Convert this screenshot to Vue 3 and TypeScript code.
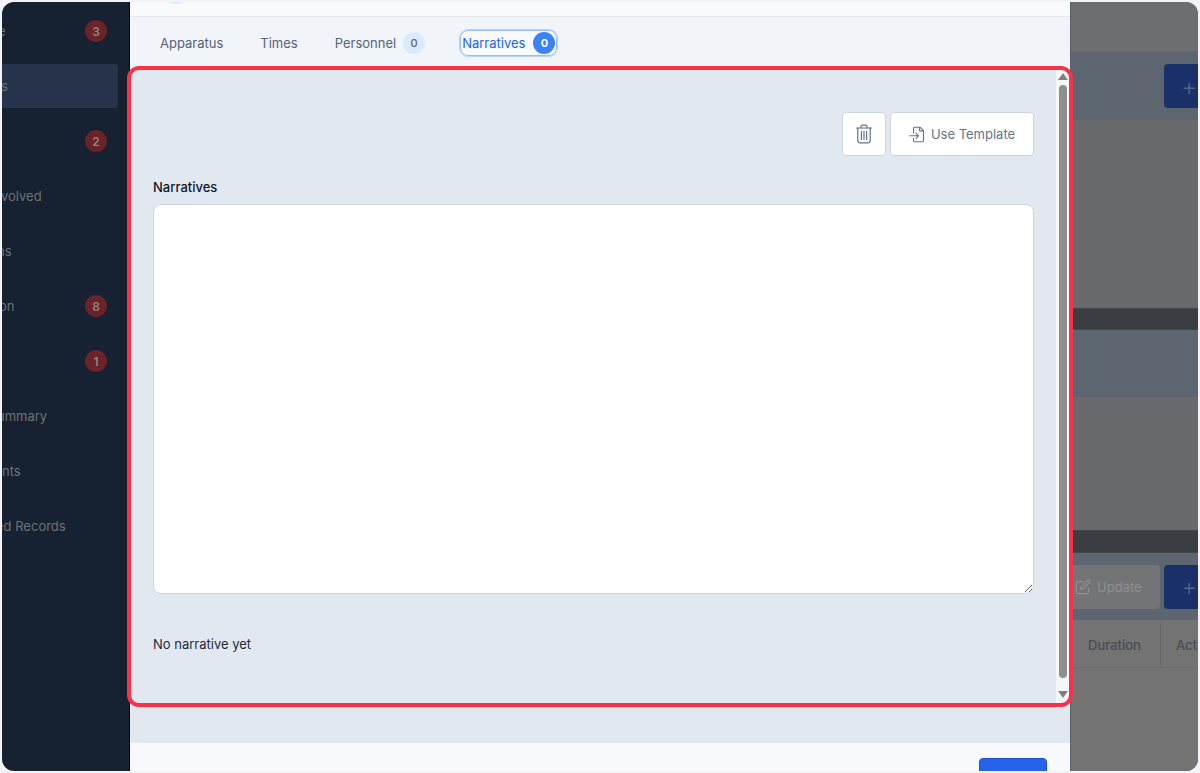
<script setup lang="ts">
interface NavItem {
  text: string;
  left: number;
  badge?: string;
  active?: boolean;
}

const navItems: NavItem[] = [
  { text: "e", left: -4, badge: "3" },
  { text: "s", left: -1, active: true },
  { text: "", left: 0, badge: "2" },
  { text: "volved", left: -1 },
  { text: "ns", left: -5 },
  { text: "on", left: -3, badge: "8" },
  { text: "", left: 0, badge: "1" },
  { text: "ummary", left: -5 },
  { text: "nts", left: 0 },
  { text: "ed Records", left: -6 },
];
</script>

<template>
  <div class="page">
    <div class="window">
      <aside class="sidebar">
        <div
          v-for="(item, i) in navItems"
          :key="i"
          class="nav-item"
          :class="{ active: item.active }"
        >
          <span class="nav-text" :style="{ marginLeft: item.left + 'px' }">{{ item.text }}</span>
          <span v-if="item.badge" class="nav-badge">{{ item.badge }}</span>
        </div>
      </aside>

      <main class="modal">
        <header class="modal-head"><span class="avatar"></span></header>
        <nav class="tabs">
          <span class="tab t1">Apparatus</span>
          <span class="tab t2">Times</span>
          <span class="tab t3">Personnel <span class="count">0</span></span>
          <span class="tab current">Narratives <span class="count on">0</span></span>
        </nav>

        <section class="scroll-wrap">
          <div class="content">
            <div class="actions">
              <button class="btn icon-btn" type="button" aria-label="Delete">
                <svg width="18" height="20" viewBox="0 0 18 20" fill="none" stroke="#64748b" stroke-width="1.2" stroke-linecap="round" stroke-linejoin="round">
                  <path d="M1.5 4h15" />
                  <path d="M6 4V2.6C6 1.7 6.6 1.2 7.4 1.2h3.2c.8 0 1.4.5 1.4 1.4V4" />
                  <path d="M2.8 4v12.6c0 1.3.9 2.2 2.2 2.2h8c1.3 0 2.2-.9 2.2-2.2V4" />
                  <path d="M6.4 7.4v8M9 7.4v8M11.6 7.4v8" />
                </svg>
              </button>
              <button class="btn tpl-btn" type="button">
                <svg width="16" height="17" viewBox="0 0 16 17" fill="none" stroke="#64748b" stroke-width="1.1" stroke-linecap="round" stroke-linejoin="round">
                  <path d="M4.5 7V2.4c0-.7.5-1.2 1.2-1.2H11l3.5 3.5v9.9c0 .7-.5 1.2-1.2 1.2H5.7c-.7 0-1.2-.5-1.2-1.2V12.5" />
                  <path d="M10.6 1.4v3.5h3.7" />
                  <path d="M.8 9.8h8.6M7 7.2l2.6 2.6L7 12.4" />
                </svg>
                Use Template
              </button>
            </div>
            <label class="field-label" for="narrative">Narratives</label>
            <textarea id="narrative" class="area"></textarea>
            <p class="empty">No narrative yet</p>
          </div>
          <div class="scrollbar">
            <span class="arrow up"></span>
            <span class="thumb"></span>
            <span class="arrow down"></span>
          </div>
        </section>

        <div class="spacer"></div>
        <footer class="modal-foot"><button class="save" type="button"></button></footer>
      </main>

      <aside class="behind">
        <div class="b-top"></div>
        <div class="b-band"><span class="b-add">+</span></div>
        <div class="b-grey g1"></div>
        <div class="b-dark"></div>
        <div class="b-band short"></div>
        <div class="b-grey g2"></div>
        <div class="b-dark d2"></div>
        <div class="b-band tools">
          <span class="b-update">
            <svg width="16" height="16" viewBox="0 0 16 16" fill="none" stroke="#8e9092" stroke-width="1.2" stroke-linecap="round" stroke-linejoin="round">
              <path d="M7.5 2.6H2.8c-.9 0-1.5.6-1.5 1.5v9.1c0 .9.6 1.5 1.5 1.5h9.1c.9 0 1.5-.6 1.5-1.5V8.5" />
              <path d="M12.4 1.4a1.4 1.4 0 0 1 2 2L8.2 9.7l-2.7.7.7-2.7z" />
            </svg>
            Update
          </span>
          <span class="b-add">+</span>
        </div>
        <div class="b-table">
          <div class="b-head">
            <span class="cell c-dur">Duration</span>
            <span class="cell c-act">Acti</span>
          </div>
        </div>
      </aside>
    </div>

    <div class="highlight"></div>
  </div>
</template>

<style>
html,
body {
  margin: 0;
  background: #f4f4f8;
}
</style>

<style scoped>
* {
  box-sizing: border-box;
}

.page {
  position: relative;
  width: 1200px;
  height: 773px;
  padding: 2px;
  overflow: hidden;
  background: #f4f4f8;
  font-family: Inter, "Liberation Sans", sans-serif;
}

.window {
  display: flex;
  height: 769px;
  overflow: hidden;
  border-radius: 12px;
}

/* sidebar */
.sidebar {
  flex: none;
  display: flex;
  flex-direction: column;
  gap: 11px;
  width: 128px;
  padding: 7px 11px 0 0;
  overflow: hidden;
  background: #162131;
  border-right: 1px solid #05080d;
}

.nav-item {
  flex: none;
  display: flex;
  align-items: center;
  justify-content: space-between;
  height: 44px;
  padding-right: 11px;
  border-radius: 0 4px 4px 0;
  color: #6f7276;
  font-size: 13px;
}

.nav-item.active {
  background: #26334a;
}

.nav-badge {
  display: grid;
  place-items: center;
  width: 22px;
  height: 22px;
  border-radius: 50%;
  background: #6b2229;
  color: #8f8586;
  font-size: 12px;
  font-weight: 600;
}

/* modal */
.modal {
  flex: none;
  display: flex;
  flex-direction: column;
  width: 940px;
  height: 769px;
  background: #e2e8f0;
}

.modal-head {
  flex: none;
  height: 15px;
  padding-left: 30px;
  overflow: hidden;
  background: #f9fafc;
  border-bottom: 1px solid #e4e8ee;
}

.avatar {
  display: block;
  width: 32px;
  height: 32px;
  margin-top: -30px;
  border-radius: 50%;
  background: #dbeafe;
}

.tabs {
  flex: none;
  display: flex;
  align-items: center;
  height: 53px;
  padding: 0 0 2px 30px;
  background: #f1f5fa;
  color: #56617a;
  font-size: 13px;
}

.tab {
  display: inline-flex;
  align-items: center;
  white-space: nowrap;
}

.t1 {
  margin-right: 37px;
}

.t2 {
  margin-right: 37px;
}

.t3 {
  gap: 7px;
  margin-right: 35px;
}

.current {
  gap: 8px;
  height: 26px;
  padding: 0 1px 0 1px;
  border: 1px solid #93bffa;
  border-radius: 8px;
  outline: 1px solid #b8d4fa;
  background: #f8fafe;
  color: #2563eb;
}

.count {
  display: grid;
  place-items: center;
  width: 22px;
  height: 22px;
  border-radius: 50%;
  background: #dbeafe;
  color: #56617a;
  font-size: 11px;
  font-weight: 500;
}

.count.on {
  background: #3b82f6;
  color: #fff;
  font-weight: 700;
}

.scroll-wrap {
  flex: none;
  display: flex;
  height: 634px;
}

.content {
  flex: 1;
  min-width: 0;
  padding: 42px 22px 0 23px;
}

.actions {
  display: flex;
  justify-content: flex-end;
  gap: 4px;
  margin-bottom: 23px;
}

.btn {
  display: inline-flex;
  align-items: center;
  justify-content: center;
  height: 44px;
  padding: 0;
  border: 1px solid #cbd5e1;
  border-radius: 4px;
  background: #fff;
  color: #64748b;
  font: 13px Inter, "Liberation Sans", sans-serif;
}

.icon-btn {
  width: 44px;
}

.tpl-btn {
  gap: 6px;
  width: 144px;
}

.field-label {
  display: block;
  margin-bottom: 9px;
  color: #111827;
  font-size: 13px;
  font-weight: 500;
  line-height: 16px;
}

.area {
  display: block;
  width: 881px;
  height: 390px;
  border: 1px solid #cbd5e1;
  border-radius: 8px;
  background: #fff;
  outline: none;
}

.empty {
  margin: 42px 0 0;
  color: #1f2937;
  font-size: 13px;
  line-height: 16px;
}

.scrollbar {
  flex: none;
  display: flex;
  flex-direction: column;
  align-items: center;
  width: 14px;
  padding: 3px 0 6px;
  background: #f6f7fa;
}

.thumb {
  flex: 1;
  width: 8px;
  margin: 5px 0 13px;
  border-radius: 4px;
  background: #8f8f8f;
}

.arrow {
  width: 0;
  height: 0;
  border-left: 5px solid transparent;
  border-right: 5px solid transparent;
}

.arrow.up {
  border-bottom: 7px solid #7f7f7f;
}

.arrow.down {
  border-top: 7px solid #7f7f7f;
}

.spacer {
  flex: 1;
}

.modal-foot {
  flex: none;
  display: flex;
  justify-content: flex-end;
  height: 28px;
  padding: 15px 23px 0 0;
  overflow: hidden;
  background: #f8f9fc;
}

.save {
  width: 68px;
  height: 44px;
  border: 1px solid #1d4ed8;
  border-radius: 4px;
  background: #2563eb;
}

/* page behind the modal */
.behind {
  flex: 1;
  min-width: 0;
  display: flex;
  flex-direction: column;
  overflow: hidden;
  background: #737373;
  border-left: 1px solid #5b626b;
}

.b-top {
  flex: none;
  height: 50px;
  background: #6c6e70;
  border-bottom: 1px solid #646669;
}

.b-band {
  flex: none;
  display: flex;
  justify-content: flex-end;
  align-items: center;
  gap: 4px;
  height: 68px;
  background: #5c6570;
}

.b-band.short {
  height: 67px;
}

.b-add {
  display: grid;
  place-items: center;
  width: 34px;
  height: 44px;
  padding-left: 16px;
  border-radius: 4px 0 0 4px;
  background: #1a3068;
  color: #566386;
  font-size: 24px;
  font-weight: 300;
}

.b-grey {
  flex: none;
  background: #67696c;
}

.g1 {
  height: 188px;
}

.g2 {
  height: 133px;
}

.b-dark {
  flex: none;
  height: 22px;
  background: #3a3d42;
  border-block: 1px solid #44474c;
}

.d2 {
  height: 23px;
}

.b-update {
  display: flex;
  align-items: center;
  gap: 6px;
  width: 90px;
  height: 44px;
  padding-left: 4px;
  border-radius: 0 4px 4px 0;
  background: #737476;
  color: #8e9092;
  font-size: 13px;
}

.b-band.tools {
  height: 67px;
}

.b-table {
  flex: 1;
  background: #737373;
}

.b-head {
  display: flex;
  height: 48px;
  padding-top: 3px;
  border-bottom: 1px solid #6c6c6c;
  color: #494d55;
  font-size: 13px;
  font-weight: 500;
}

.cell {
  flex: none;
  display: flex;
  align-items: center;
  white-space: nowrap;
}

.c-dur {
  width: 90px;
  padding-left: 17px;
  border-right: 1px solid #656565;
}

.c-act {
  padding-left: 15px;
}

/* review annotation drawn over the page */
.highlight {
  position: absolute;
  left: 127px;
  top: 66px;
  width: 946px;
  height: 641px;
  border: 4px solid #f7334a;
  border-radius: 12px;
  pointer-events: none;
}
</style>
